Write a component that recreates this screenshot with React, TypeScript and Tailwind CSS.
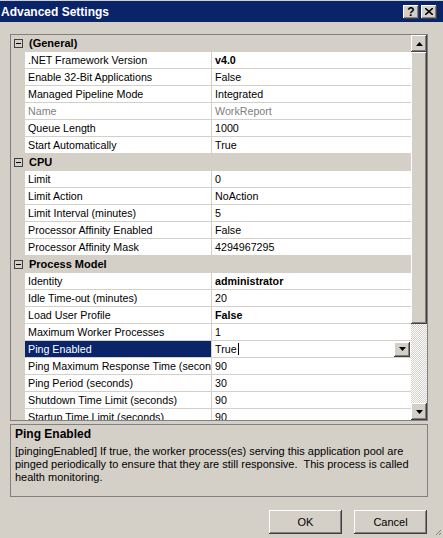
import React from "react";

type Row = { name: string; value: string; bold?: boolean; dim?: boolean; selected?: boolean };
type Section = { title: string; rows: Row[] };

const sections: Section[] = [
  {
    title: "(General)",
    rows: [
      { name: ".NET Framework Version", value: "v4.0", bold: true },
      { name: "Enable 32-Bit Applications", value: "False" },
      { name: "Managed Pipeline Mode", value: "Integrated" },
      { name: "Name", value: "WorkReport", dim: true },
      { name: "Queue Length", value: "1000" },
      { name: "Start Automatically", value: "True" },
    ],
  },
  {
    title: "CPU",
    rows: [
      { name: "Limit", value: "0" },
      { name: "Limit Action", value: "NoAction" },
      { name: "Limit Interval (minutes)", value: "5" },
      { name: "Processor Affinity Enabled", value: "False" },
      { name: "Processor Affinity Mask", value: "4294967295" },
    ],
  },
  {
    title: "Process Model",
    rows: [
      { name: "Identity", value: "administrator", bold: true },
      { name: "Idle Time-out (minutes)", value: "20" },
      { name: "Load User Profile", value: "False", bold: true },
      { name: "Maximum Worker Processes", value: "1" },
      { name: "Ping Enabled", value: "True", selected: true },
      { name: "Ping Maximum Response Time (seconds)", value: "90" },
      { name: "Ping Period (seconds)", value: "30" },
      { name: "Shutdown Time Limit (seconds)", value: "90" },
      { name: "Startup Time Limit (seconds)", value: "90" },
    ],
  },
];

// classic raised 3d edge
const raised =
  "bg-[#D4D0C8] shadow-[inset_-1px_-1px_#404040,inset_1px_1px_#fff,inset_-2px_-2px_#808080,inset_2px_2px_#D4D0C8]";

function Arrow({ up }: { up?: boolean }) {
  return (
    <svg width="7" height="4" viewBox="0 0 7 4">
      {up ? <path d="M3.5 0L7 4H0z" fill="#000" /> : <path d="M0 0h7L3.5 4z" fill="#000" />}
    </svg>
  );
}

function Minus() {
  return (
    <div className="w-[9px] h-[9px] border border-[#404040] bg-[#D4D0C8] flex items-center justify-center">
      <div className="w-[5px] h-[1px] bg-black" />
    </div>
  );
}

export default function App() {
  return (
    <div className="w-[443px] h-[538px] bg-[#D4D0C8] overflow-hidden relative font-['Liberation_Sans',Arial,sans-serif] text-[11px] text-black">
      {/* title bar */}
      <div className="mt-[1px] h-[21px] bg-[#0A246A] flex items-center justify-between pl-[1px] pr-[6px]">
        <span className="text-white font-bold text-[12px]">Advanced Settings</span>
        <div className="flex gap-[2px]">
          <div className={`w-[16px] h-[14px] ${raised} flex items-center justify-center font-bold text-[12px] leading-none`}>?</div>
          <div className={`w-[16px] h-[14px] ${raised} flex items-center justify-center`}>
            <svg width="8" height="7" viewBox="0 0 8 7">
              <path d="M0 0l8 7M8 0L0 7" stroke="#000" strokeWidth="1.6" />
            </svg>
          </div>
        </div>
      </div>

      {/* property grid */}
      <div className="ml-[10px] mt-[12px] w-[418px] h-[387px] border border-[#808080] flex bg-[#D4D0C8] text-[10.7px]">
        <div className="w-[400px] h-full overflow-hidden">
          {sections.map((s) => (
            <div key={s.title}>
              <div className="h-[17px] flex items-center">
                <div className="w-[14px] flex justify-center pl-[1px]">
                  <Minus />
                </div>
                <span className="ml-[4px] font-bold text-[11px]">{s.title}</span>
              </div>
              {s.rows.map((r) => (
                <div key={r.name} className="h-[17px] flex">
                  <div className="w-[14px] shrink-0" />
                  <div
                    className={`w-[187px] shrink-0 border-r border-b border-[#D4D0C8] pl-[3px] flex items-center whitespace-nowrap overflow-hidden ${
                      r.selected ? "bg-[#0A246A] text-white" : "bg-white"
                    } ${r.dim ? "text-[#808080]" : ""}`}
                  >
                    {r.name}
                  </div>
                  <div
                    className={`flex-1 bg-white border-b border-[#D4D0C8] pl-[3px] flex items-center justify-between whitespace-nowrap ${
                      r.bold ? "font-bold" : ""
                    } ${r.dim ? "text-[#808080]" : ""}`}
                  >
                    {r.selected ? (
                      <>
                        <span className="flex items-center">
                          True<span className="inline-block w-[1px] h-[12px] bg-black ml-[1px]" />
                        </span>
                        <div className={`w-[16px] h-[15px] mr-[1px] ${raised} flex items-center justify-center`}>
                          <Arrow />
                        </div>
                      </>
                    ) : (
                      r.value
                    )}
                  </div>
                </div>
              ))}
            </div>
          ))}
        </div>
        {/* scrollbar */}
        <div className="w-[16px] h-full flex flex-col">
          <div className={`h-[17px] ${raised} flex items-center justify-center`}>
            <Arrow up />
          </div>
          <div className={`h-[272px] ${raised}`} />
          <div className="flex-1 bg-[repeating-conic-gradient(#ffffff_0_25%,#D4D0C8_0_50%)] bg-[length:2px_2px]" />
          <div className={`h-[17px] ${raised} flex items-center justify-center`}>
            <Arrow />
          </div>
        </div>
      </div>

      {/* description */}
      <div className="ml-[10px] mt-[3px] w-[418px] h-[73px] border border-[#808080] px-[4px] pt-[3px] leading-[13px]">
        <div className="font-bold text-[12px] mb-[4px]">Ping Enabled</div>
        <div>
          [pingingEnabled] If true, the worker process(es) serving this application pool are pinged periodically to
          ensure that they are still responsive.&nbsp; This process is called health monitoring.
        </div>
      </div>

      {/* buttons */}
      <div className="mt-[13px] flex justify-end gap-[12px] pr-[16px]">
        <button className={`w-[73px] h-[24px] ${raised} text-[11px]`}>OK</button>
        <button className={`w-[73px] h-[24px] ${raised} text-[11px]`}>Cancel</button>
      </div>

      <svg className="absolute right-[2px] bottom-[3px]" width="6" height="6" viewBox="0 0 6 6">
        <path d="M6 1L1 6M6 4L4 6" stroke="#808080" strokeWidth="1" />
      </svg>
    </div>
  );
}
